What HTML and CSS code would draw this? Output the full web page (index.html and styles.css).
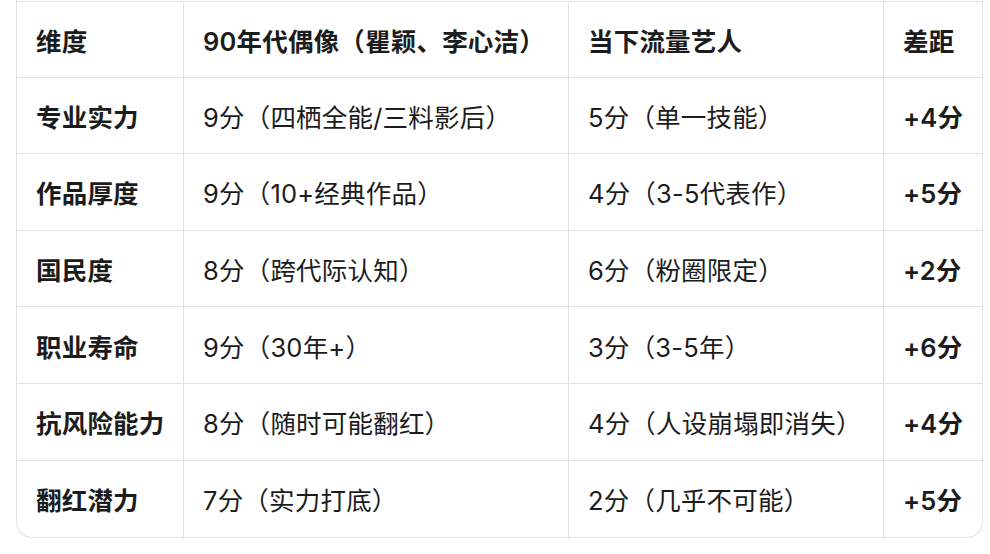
FILE: index.html
```html
<!DOCTYPE html>
<html lang="zh-CN">
<head>
<meta charset="utf-8">
<title>对比表</title>
<link rel="stylesheet" href="styles.css">
</head>
<body>
<div class="wrap">
  <div class="grid">
    <div class="cell head">维度</div>
    <div class="cell head">90年代偶像（瞿颖、李心洁）</div>
    <div class="cell head">当下流量艺人</div>
    <div class="cell head last">差距</div>

    <div class="cell bold">专业实力</div>
    <div class="cell">9分（四栖全能/三料影后）</div>
    <div class="cell">5分（单一技能）</div>
    <div class="cell bold last">+4分</div>

    <div class="cell bold">作品厚度</div>
    <div class="cell">9分（10+经典作品）</div>
    <div class="cell">4分（3-5代表作）</div>
    <div class="cell bold last">+5分</div>

    <div class="cell bold">国民度</div>
    <div class="cell">8分（跨代际认知）</div>
    <div class="cell">6分（粉圈限定）</div>
    <div class="cell bold last">+2分</div>

    <div class="cell bold">职业寿命</div>
    <div class="cell">9分（30年+）</div>
    <div class="cell">3分（3-5年）</div>
    <div class="cell bold last">+6分</div>

    <div class="cell bold">抗风险能力</div>
    <div class="cell">8分（随时可能翻红）</div>
    <div class="cell">4分（人设崩塌即消失）</div>
    <div class="cell bold last">+4分</div>

    <div class="cell bold bottom">翻红潜力</div>
    <div class="cell bottom">7分（实力打底）</div>
    <div class="cell bottom">2分（几乎不可能）</div>
    <div class="cell bold last bottom">+5分</div>
  </div>
</div>
</body>
</html>
```

FILE: styles.css
```css
html, body {
  margin: 0;
  padding: 0;
  background: #ffffff;
}

body {
  font-family: Inter, "Noto Sans CJK SC", sans-serif;
  color: #1c1c1c;
  font-size: 25.5px;
}

.wrap {
  box-sizing: border-box;
  width: 967px;
  margin: 0 0 0 16px;
  padding-top: 1px;
  border: 1px solid #e2e2e2;
  border-top: none;
  border-radius: 0 0 16px 16px;
  overflow: hidden;
}

.grid {
  display: grid;
  grid-template-columns: 167px 385px 315px 98px;
  grid-auto-rows: 76.6px;
}

.cell {
  box-sizing: border-box;
  display: flex;
  align-items: center;
  padding: 0 19px;
  border-right: 1px solid #e2e2e2;
  border-bottom: 1px solid #e2e2e2;
  white-space: nowrap;
  letter-spacing: 0.2px;
}

.head {
  font-weight: 600;
  border-top: 1px solid #e2e2e2;
}

.bold {
  font-weight: 600;
}

.last {
  border-right: none;
}

.bottom {
  border-bottom: none;
}
```
